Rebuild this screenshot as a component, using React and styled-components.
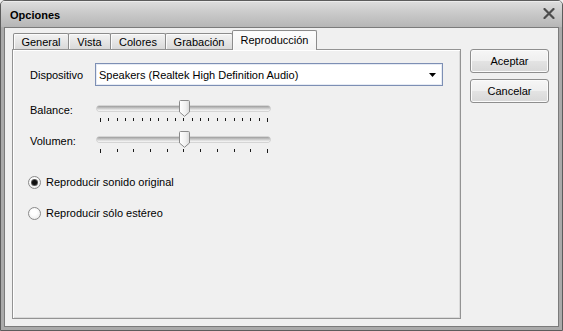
import React from "react";
import styled, { createGlobalStyle } from "styled-components";

const Global = createGlobalStyle`
  html, body { margin: 0; padding: 0; background: #f0f0f0; }
  * { box-sizing: border-box; }
  body { font-family: "Liberation Sans", Arial, sans-serif; font-size: 11px; color: #000; }
`;

const Window = styled.div`
  width: 563px;
  height: 331px;
  border: 1px solid #5c5c5c;
  border-radius: 5px 5px 0 0;
  background: #ababab;
  display: flex;
  flex-direction: column;
  overflow: hidden;
`;

const TitleBar = styled.div`
  height: 26px;
  flex: none;
  display: flex;
  align-items: center;
  justify-content: space-between;
  padding: 2px 6px 0 9px;
  background: linear-gradient(#dedede 0%, #cacaca 45%, #b6b6b6 100%);
  box-shadow: inset 0 1px 0 #ececec;
`;

const Title = styled.span`
  font-weight: bold;
  font-size: 11px;
  color: #000;
`;

const CloseBox = styled.div`
  width: 14px;
  height: 12px;
  display: flex;
  align-items: center;
  justify-content: center;
  margin-top: -3px;
`;

const Frame = styled.div`
  flex: 1;
  display: flex;
  padding: 0 3px 3px 3px;
  background: #aaaaaa;
`;

const Client = styled.div`
  flex: 1;
  display: flex;
  align-items: flex-start;
  gap: 9px;
  border: 1px solid #7b7b7b;
  background: #f0f0f0;
  padding: 2px 0 0 7px;
`;

const LeftCol = styled.div`
  width: 449px;
  display: flex;
  flex-direction: column;
`;

const TabStrip = styled.div`
  height: 19px;
  display: flex;
  align-items: flex-end;
  padding-left: 1px;
`;

const Tab = styled.div`
  width: ${(p) => p.$w}px;
  height: ${(p) => (p.$active ? 20 : 16)}px;
  margin-left: ${(p) => (p.$first ? 0 : -1)}px;
  margin-bottom: ${(p) => (p.$active ? -1 : 0)}px;
  position: relative;
  z-index: ${(p) => (p.$active ? 2 : 1)};
  border: 1px solid #8c8c8c;
  border-bottom: none;
  border-radius: 2px 2px 0 0;
  background: ${(p) =>
    p.$active
      ? "linear-gradient(#fdfdfd, #f3f3f3)"
      : "linear-gradient(#f3f3f3 0%, #e6e6e6 50%, #d9d9d9 100%)"};
  box-shadow: inset 1px 1px 0 #fbfbfb;
  display: flex;
  align-items: center;
  justify-content: center;
  padding-bottom: ${(p) => (p.$active ? 2 : 0)}px;
  color: #000;
  white-space: nowrap;
`;

const Panel = styled.div`
  height: 270px;
  border: 1px solid #939393;
  box-shadow: inset 1px 1px 0 #ffffff, inset -1px -1px 0 #dadada;
  background: #f0f0f0;
  display: flex;
  flex-direction: column;
  padding: 13px 0 0 17px;
`;

const Row = styled.div`
  display: flex;
  align-items: ${(p) => (p.$top ? "flex-start" : "center")};
  margin-top: ${(p) => p.$mt || 0}px;
`;

const Label = styled.span`
  width: 65px;
  flex: none;
  line-height: 14px;
  padding-top: ${(p) => p.$pt || 0}px;
`;

const Select = styled.div`
  width: 348px;
  height: 23px;
  border: 1px solid #7d8fb4;
  box-shadow: inset 0 0 0 1px #e6ebf4;
  background: #ffffff;
  display: flex;
  align-items: center;
  justify-content: space-between;
  padding: 0 6px 0 3px;
  font-size: 11px;
`;

const SliderBox = styled.div`
  width: 178px;
  display: flex;
  flex-direction: column;
`;

const TrackArea = styled.div`
  position: relative;
  height: 18px;
  padding: 6px 3px 0 2px;
`;

const Track = styled.div`
  height: 5px;
  border-radius: 2px;
  background: linear-gradient(#9d9d9d 0%, #c4c4c4 40%, #e9e9e9 80%, #f6f6f6 100%);
  box-shadow: 0 0 0 0.5px #b9b9b9;
`;

const Thumb = styled.svg`
  position: absolute;
  top: 0;
`;

const Ticks = styled.div`
  height: 6px;
  display: flex;
  justify-content: space-between;
  align-items: flex-start;
  padding: 0 5px 0 5px;
`;

const Tick = styled.span`
  width: 1px;
  height: ${(p) => (p.$end ? 4 : 3)}px;
  background: #1a1a1a;
`;

const RadioRow = styled.label`
  display: flex;
  align-items: center;
  gap: 5px;
  height: 16px;
  margin-top: ${(p) => p.$mt}px;
  margin-left: -2px;
`;

const RadioDot = styled.span`
  width: 13px;
  height: 13px;
  border-radius: 50%;
  border: 1px solid #8a8a8a;
  background: radial-gradient(circle at 45% 40%, #ffffff 30%, #e4e4e4 100%);
  display: flex;
  align-items: center;
  justify-content: center;
  &::after {
    content: "";
    width: 5px;
    height: 5px;
    border-radius: 50%;
    background: ${(p) => (p.$checked ? "#111" : "transparent")};
    box-shadow: ${(p) => (p.$checked ? "0 0 0 1px #555" : "none")};
  }
`;

const ButtonCol = styled.div`
  display: flex;
  flex-direction: column;
  gap: 6px;
  margin-top: 19px;
`;

const Button = styled.div`
  width: 79px;
  height: 24px;
  border: 1px solid #8e8e8e;
  border-radius: 3px;
  background: linear-gradient(#f6f6f6 0%, #efefef 48%, #e3e3e3 52%, #d8d8d8 100%);
  box-shadow: inset 0 0 0 1px #fbfbfb;
  display: flex;
  align-items: center;
  justify-content: center;
  color: #000;
`;

function Slider({ ticks, value }) {
  const range = 178 - 11;
  const left = Math.round(range * value);
  return (
    <SliderBox>
      <TrackArea>
        <Track />
        <Thumb width="11" height="17" viewBox="0 0 11 17" style={{ left }}>
          <defs>
            <linearGradient id="tg" x1="0" y1="0" x2="1" y2="0">
              <stop offset="0" stopColor="#ffffff" />
              <stop offset="0.6" stopColor="#f1f1f1" />
              <stop offset="1" stopColor="#dadada" />
            </linearGradient>
          </defs>
          <path
            d="M1.5 0.5 H9.5 Q10.5 0.5 10.5 1.5 V12 L5.5 16.3 L0.5 12 V1.5 Q0.5 0.5 1.5 0.5 Z"
            fill="url(#tg)"
            stroke="#8a8a8a"
          />
        </Thumb>
      </TrackArea>
      <Ticks>
        {Array.from({ length: ticks }).map((_, i) => (
          <Tick key={i} $end={i === 0 || i === ticks - 1} />
        ))}
      </Ticks>
    </SliderBox>
  );
}

const tabs = [
  { label: "General", w: 56 },
  { label: "Vista", w: 43 },
  { label: "Colores", w: 56 },
  { label: "Grabación", w: 68 },
  { label: "Reproducción", w: 85, active: true },
];

export default function App() {
  return (
    <>
      <Global />
      <Window>
        <TitleBar>
          <Title>Opciones</Title>
          <CloseBox>
            <svg width="12" height="11" viewBox="0 0 12 11">
              <path d="M1.5 1 L10.5 10 M10.5 1 L1.5 10" stroke="#4d4d4d" strokeWidth="2.2" strokeLinecap="round" />
            </svg>
          </CloseBox>
        </TitleBar>
        <Frame>
          <Client>
            <LeftCol>
              <TabStrip>
                {tabs.map((t, i) => (
                  <Tab key={t.label} $w={t.w} $active={t.active} $first={i === 0}>
                    {t.label}
                  </Tab>
                ))}
              </TabStrip>
              <Panel>
                <Row>
                  <Label>Dispositivo</Label>
                  <Select>
                    <span>Speakers (Realtek High Definition Audio)</span>
                    <svg width="7" height="4" viewBox="0 0 7 4">
                      <polygon points="0,0 7,0 3.5,4" fill="#000" />
                    </svg>
                  </Select>
                </Row>
                <Row $top $mt={14}>
                  <Label $pt={3}>Balance:</Label>
                  <Slider ticks={21} value={0.5} />
                </Row>
                <Row $top $mt={7}>
                  <Label $pt={3}>Volumen:</Label>
                  <Slider ticks={11} value={0.5} />
                </Row>
                <RadioRow $mt={19}>
                  <RadioDot $checked />
                  <span>Reproducir sonido original</span>
                </RadioRow>
                <RadioRow $mt={15}>
                  <RadioDot />
                  <span>Reproducir sólo estéreo</span>
                </RadioRow>
              </Panel>
            </LeftCol>
            <ButtonCol>
              <Button>Aceptar</Button>
              <Button>Cancelar</Button>
            </ButtonCol>
          </Client>
        </Frame>
      </Window>
    </>
  );
}
